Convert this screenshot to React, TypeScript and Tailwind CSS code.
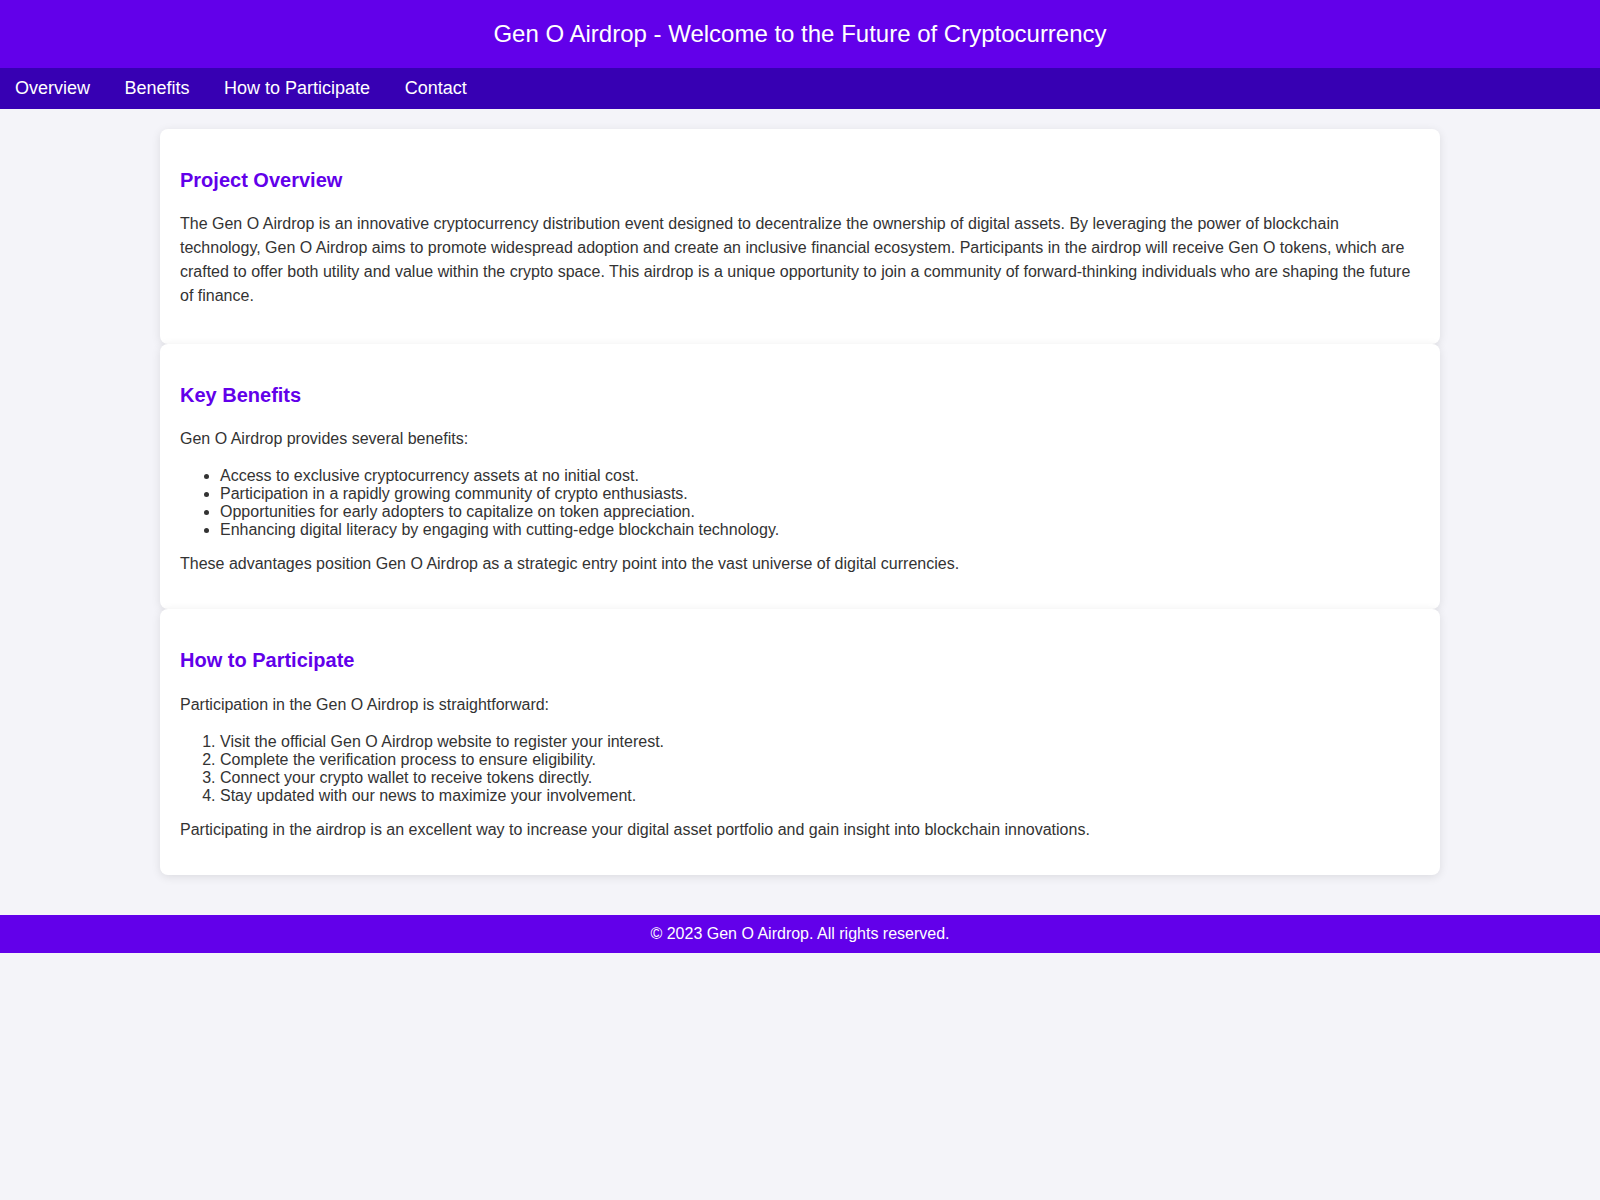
import React from 'react';

const navLinks = ['Overview', 'Benefits', 'How to Participate', 'Contact'];

const benefits = [
    'Access to exclusive cryptocurrency assets at no initial cost.',
    'Participation in a rapidly growing community of crypto enthusiasts.',
    'Opportunities for early adopters to capitalize on token appreciation.',
    'Enhancing digital literacy by engaging with cutting-edge blockchain technology.',
];

const steps = [
    'Visit the official Gen O Airdrop website to register your interest.',
    'Complete the verification process to ensure eligibility.',
    'Connect your crypto wallet to receive tokens directly.',
    'Stay updated with our news to maximize your involvement.',
];

const Section: React.FC<{ id: string; title: string; children: React.ReactNode }> = ({ id, title, children }) => (
    <section
        id={id}
        className="bg-white rounded-lg px-5 py-5 shadow-[0_2px_10px_rgba(0,0,0,0.1)]"
    >
        <h2 className="text-[20px] font-bold leading-[30px] text-[#6200ea] mt-[15.6px] mb-[17.6px]">{title}</h2>
        {children}
    </section>
);

export default function App() {
    return (
        <div className="min-h-screen bg-[#f4f4f9] text-[#333] font-['Liberation_Sans',Arial,sans-serif] leading-6">
            <header className="bg-[#6200ea] text-white text-center py-5">
                <h1 className="text-2xl font-normal leading-[normal]">
                    Gen O Airdrop - Welcome to the Future of Cryptocurrency
                </h1>
            </header>

            <nav className="bg-[#3700b3] flex gap-[4.5px] py-[10px]">
                {navLinks.map(link => (
                    <a
                        key={link}
                        href={`#${link.toLowerCase().replace(/ /g, '-')}`}
                        className="px-[15px] text-white text-[18px] leading-[normal]"
                    >
                        {link}
                    </a>
                ))}
            </nav>

            <div className="py-5">
                <div className="w-4/5 mx-auto">
                    <Section id="overview" title="Project Overview">
                        <p className="my-4">
                            The Gen O Airdrop is an innovative cryptocurrency distribution event designed to decentralize the ownership of digital assets. By leveraging the power of blockchain technology, Gen O Airdrop aims to promote widespread adoption and create an inclusive financial ecosystem. Participants in the airdrop will receive Gen O tokens, which are crafted to offer both utility and value within the crypto space. This airdrop is a unique opportunity to join a community of forward-thinking individuals who are shaping the future of finance.
                        </p>
                    </Section>

                    <Section id="benefits" title="Key Benefits">
                        <p className="my-4">Gen O Airdrop provides several benefits:</p>
                        <ul className="list-disc pl-10 mt-4 mb-[13px] leading-[18px]">
                            {benefits.map(item => (
                                <li key={item}>{item}</li>
                            ))}
                        </ul>
                        <p className="mt-[13px] mb-[13px]">
                            These advantages position Gen O Airdrop as a strategic entry point into the vast universe of digital currencies.
                        </p>
                    </Section>

                    <Section id="how-to-participate" title="How to Participate">
                        <p className="my-4">Participation in the Gen O Airdrop is straightforward:</p>
                        <ol className="list-decimal pl-10 mt-4 mb-[13px] leading-[18px]">
                            {steps.map(item => (
                                <li key={item}>{item}</li>
                            ))}
                        </ol>
                        <p className="mt-[13px] mb-[13px]">
                            Participating in the airdrop is an excellent way to increase your digital asset portfolio and gain insight into blockchain innovations.
                        </p>
                    </Section>
                </div>
            </div>

            <footer id="contact" className="bg-[#6200ea] text-white text-center py-[10px] mt-5 leading-[normal]">
                <p>© 2023 Gen O Airdrop. All rights reserved.</p>
            </footer>
        </div>
    );
}
